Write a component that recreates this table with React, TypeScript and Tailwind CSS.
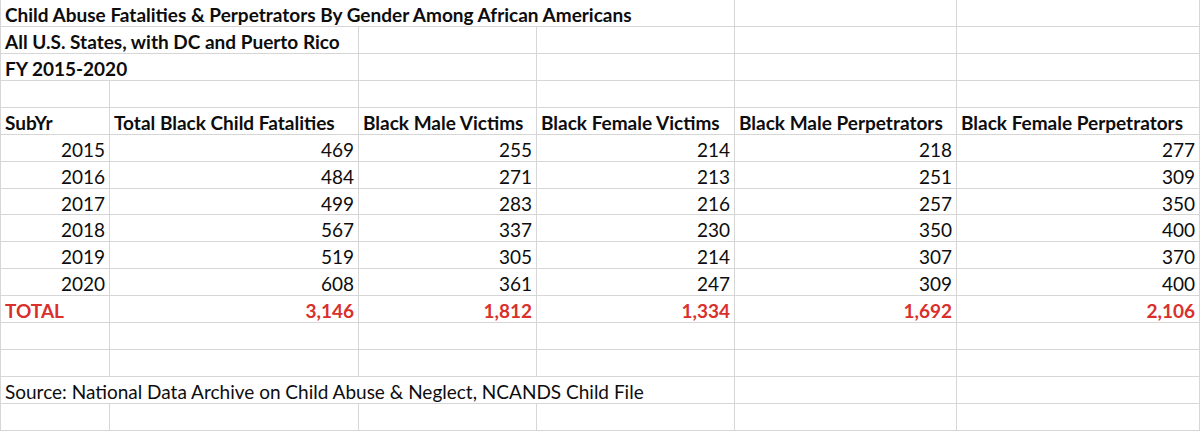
const headers = [
  'SubYr',
  'Total Black Child Fatalities',
  'Black Male Victims',
  'Black Female Victims',
  'Black Male Perpetrators',
  'Black Female Perpetrators',
];

const rows = [
  ['2015', '469', '255', '214', '218', '277'],
  ['2016', '484', '271', '213', '251', '309'],
  ['2017', '499', '283', '216', '257', '350'],
  ['2018', '567', '337', '230', '350', '400'],
  ['2019', '519', '305', '214', '307', '370'],
  ['2020', '608', '361', '247', '309', '400'],
];

const totals = ['3,146', '1,812', '1,334', '1,692', '2,106'];

function Cell({
  children,
  className = '',
  first = false,
  short = false,
}: {
  children?: React.ReactNode;
  className?: string;
  first?: boolean;
  short?: boolean;
}) {
  return (
    <div
      className={`flex items-center overflow-visible whitespace-nowrap border-b border-r border-[#d6d6d6] px-[4px] pt-[3px] leading-none ${
        short ? 'h-[26px]' : 'h-[27px]'
      } ${first ? 'border-l' : ''} ${className}`}
    >
      {children}
    </div>
  );
}

function EmptyRow() {
  return (
    <>
      {[0, 1, 2, 3, 4, 5].map((i) => (
        <Cell key={i} first={i === 0} />
      ))}
    </>
  );
}

export default function App() {
  return (
    <div className="w-[1200px] h-[431px] overflow-hidden bg-white">
      <div className="grid w-[1200px] grid-cols-[110px_249px_178px_198px_222px_243px] font-['Lato',sans-serif] text-[19px] text-[#0d0d0d]">
        {/* title block */}
        <Cell first className="col-span-4 font-bold">
          Child Abuse Fatalities &amp; Perpetrators By Gender Among African Americans
        </Cell>
        <Cell />
        <Cell />

        <Cell first className="col-span-2 font-bold">
          All U.S. States, with DC and Puerto Rico
        </Cell>
        <Cell />
        <Cell />
        <Cell />
        <Cell />

        <Cell first className="col-span-2 font-bold">
          FY 2015-2020
        </Cell>
        <Cell />
        <Cell />
        <Cell />
        <Cell />

        <EmptyRow />

        {headers.map((h, i) => (
          <Cell key={h} first={i === 0} className="font-bold">
            {h}
          </Cell>
        ))}

        {rows.map((r) =>
          r.map((v, i) => (
            <Cell key={r[0] + i} first={i === 0} short={r[0] === '2017'} className="justify-end">
              {v}
            </Cell>
          ))
        )}

        <Cell first className="font-bold text-[#d9302c]">
          TOTAL
        </Cell>
        {totals.map((t) => (
          <Cell key={t} className="justify-end font-bold text-[#d9302c]">
            {t}
          </Cell>
        ))}

        <EmptyRow />
        <EmptyRow />

        <Cell first className="col-span-4">
          Source: National Data Archive on Child Abuse &amp; Neglect, NCANDS Child File
        </Cell>
        <Cell />
        <Cell />

        <EmptyRow />
      </div>
    </div>
  );
}
